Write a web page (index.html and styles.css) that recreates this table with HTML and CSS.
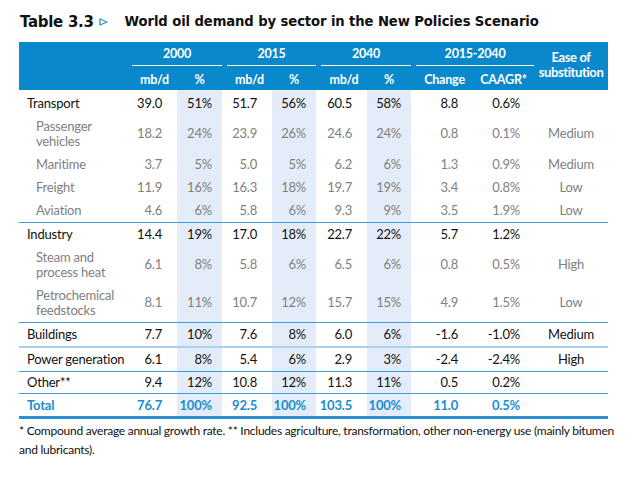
FILE: index.html
```html
<!DOCTYPE html>
<html>
<head>
<meta charset="utf-8">
<link rel="stylesheet" href="styles.css">
</head>
<body>
<div class="page">
  <h1 class="title"><span class="tnum">Table 3.3</span><svg class="tri" width="9" height="8" viewBox="0 0 9 8"><path d="M1 1 L8 4 L1 7 Z" fill="none" stroke="#2b8fd6" stroke-width="1.3" stroke-linejoin="round"/></svg><span class="ttext">World oil demand by sector in the New Policies Scenario</span></h1>
  <table class="data">
    <colgroup>
      <col class="c-label"><col class="c-mb"><col class="c-pc"><col class="c-mb"><col class="c-pc2"><col class="c-mb3"><col class="c-pc2"><col class="c-chg"><col class="c-cag"><col class="c-ease">
    </colgroup>
    <thead>
      <tr class="h1">
        <th></th>
        <th colspan="2"><div class="yr">2000</div></th>
        <th colspan="2"><div class="yr">2015</div></th>
        <th colspan="2"><div class="yr">2040</div></th>
        <th colspan="2"><div class="yr">2015-2040</div></th>
        <th rowspan="2" class="ease-h">Ease of<br>substitution</th>
      </tr>
      <tr class="h2">
        <th></th>
        <th class="first">mb/d</th><th>%</th>
        <th class="first">mb/d</th><th>%</th>
        <th class="first">mb/d</th><th>%</th>
        <th class="first">Change</th><th>CAAGR*</th>
      </tr>
    </thead>
    <tbody>
      <tr class="main top">
        <td class="lbl">Transport</td><td class="mb">39.0</td><td class="pc">51%</td><td class="mb">51.7</td><td class="pc">56%</td><td class="mb">60.5</td><td class="pc">58%</td><td class="chg">8.8</td><td class="cag">0.6%</td><td class="ease"></td>
      </tr>
      <tr class="sub">
        <td class="lbl">Passenger<br>vehicles</td><td class="mb">18.2</td><td class="pc">24%</td><td class="mb">23.9</td><td class="pc">26%</td><td class="mb">24.6</td><td class="pc">24%</td><td class="chg">0.8</td><td class="cag">0.1%</td><td class="ease">Medium</td>
      </tr>
      <tr class="sub">
        <td class="lbl">Maritime</td><td class="mb">3.7</td><td class="pc">5%</td><td class="mb">5.0</td><td class="pc">5%</td><td class="mb">6.2</td><td class="pc">6%</td><td class="chg">1.3</td><td class="cag">0.9%</td><td class="ease">Medium</td>
      </tr>
      <tr class="sub">
        <td class="lbl">Freight</td><td class="mb">11.9</td><td class="pc">16%</td><td class="mb">16.3</td><td class="pc">18%</td><td class="mb">19.7</td><td class="pc">19%</td><td class="chg">3.4</td><td class="cag">0.8%</td><td class="ease">Low</td>
      </tr>
      <tr class="sub">
        <td class="lbl">Aviation</td><td class="mb">4.6</td><td class="pc">6%</td><td class="mb">5.8</td><td class="pc">6%</td><td class="mb">9.3</td><td class="pc">9%</td><td class="chg">3.5</td><td class="cag">1.9%</td><td class="ease">Low</td>
      </tr>
      <tr class="main sep">
        <td class="lbl">Industry</td><td class="mb">14.4</td><td class="pc">19%</td><td class="mb">17.0</td><td class="pc">18%</td><td class="mb">22.7</td><td class="pc">22%</td><td class="chg">5.7</td><td class="cag">1.2%</td><td class="ease"></td>
      </tr>
      <tr class="sub">
        <td class="lbl">Steam and<br>process heat</td><td class="mb">6.1</td><td class="pc">8%</td><td class="mb">5.8</td><td class="pc">6%</td><td class="mb">6.5</td><td class="pc">6%</td><td class="chg">0.8</td><td class="cag">0.5%</td><td class="ease">High</td>
      </tr>
      <tr class="sub">
        <td class="lbl">Petrochemical<br>feedstocks</td><td class="mb">8.1</td><td class="pc">11%</td><td class="mb">10.7</td><td class="pc">12%</td><td class="mb">15.7</td><td class="pc">15%</td><td class="chg">4.9</td><td class="cag">1.5%</td><td class="ease">Low</td>
      </tr>
      <tr class="main sep">
        <td class="lbl">Buildings</td><td class="mb">7.7</td><td class="pc">10%</td><td class="mb">7.6</td><td class="pc">8%</td><td class="mb">6.0</td><td class="pc">6%</td><td class="chg">-1.6</td><td class="cag">-1.0%</td><td class="ease">Medium</td>
      </tr>
      <tr class="main sep-light">
        <td class="lbl">Power generation</td><td class="mb">6.1</td><td class="pc">8%</td><td class="mb">5.4</td><td class="pc">6%</td><td class="mb">2.9</td><td class="pc">3%</td><td class="chg">-2.4</td><td class="cag">-2.4%</td><td class="ease">High</td>
      </tr>
      <tr class="main sep tight">
        <td class="lbl">Other**</td><td class="mb">9.4</td><td class="pc">12%</td><td class="mb">10.8</td><td class="pc">12%</td><td class="mb">11.3</td><td class="pc">11%</td><td class="chg">0.5</td><td class="cag">0.2%</td><td class="ease"></td>
      </tr>
      <tr class="total sep tight">
        <td class="lbl">Total</td><td class="mb">76.7</td><td class="pc">100%</td><td class="mb">92.5</td><td class="pc">100%</td><td class="mb">103.5</td><td class="pc">100%</td><td class="chg">11.0</td><td class="cag">0.5%</td><td class="ease"></td>
      </tr>
    </tbody>
  </table>
  <p class="note">* Compound average annual growth rate. ** Includes agriculture, transformation, other non-energy use (mainly bitumen<br>and lubricants).</p>
</div>
</body>
</html>
```
FILE: styles.css
```css
html, body {
  margin: 0;
  padding: 0;
  background: #ffffff;
}
.page {
  padding: 6px 0 0 19px;
  width: 589px;
  font-family: Lato, "Open Sans", sans-serif;
}
.title {
  margin: 0 0 5px;
  height: 31px;
  display: flex;
  align-items: center;
  font-family: "DejaVu Sans", sans-serif;
  font-weight: bold;
  color: #111;
  white-space: nowrap;
}
.tnum {
  font-size: 15px;
  margin-left: 1px;
  letter-spacing: -0.3px;
}
.tri {
  margin: 0 0 0 5px;
}
.ttext {
  margin-left: 17px;
  font-size: 13.2px;
  font-weight: bold;
  letter-spacing: -0.1px;
}
table.data {
  border-collapse: collapse;
  table-layout: fixed;
  width: 589px;
  font-size: 13px;
  letter-spacing: -0.2px;
}
.c-label { width: 108px; }
.c-mb { width: 50px; }
.c-pc { width: 45px; }
.c-pc2 { width: 44px; }
.c-mb3 { width: 51px; }
.c-chg { width: 62px; }
.c-cag { width: 61px; }
.c-ease { width: 74px; }

thead th {
  background: #0a88cc;
  color: #ffffff;
  font-weight: bold;
  font-size: 12.5px;
  padding: 0;
  text-align: center;
  line-height: 15px;
}
thead tr.h1 th {
  height: 23px;
  vertical-align: bottom;
}
thead tr.h1 .yr {
  margin-left: 5px;
  border-bottom: 1.5px solid #ffffff;
  padding: 4px 0 4px;
}
thead tr.h2 th {
  height: 23.5px;
  vertical-align: middle;
  padding-top: 3px;
  box-sizing: border-box;
}
thead tr.h2 th.first {
  padding-left: 5px;
}
thead tr.h1 th.ease-h {
  vertical-align: middle;
  padding: 0 0 2px;
  line-height: 14.5px;
  font-size: 13px;
  white-space: nowrap;
  letter-spacing: -0.4px;
}
tbody td {
  padding-top: 4px;
  padding-bottom: 4px;
  line-height: 15px;
  vertical-align: middle;
  white-space: nowrap;
}
tbody tr.top td {
  padding-top: 6px;
}
tbody tr.tight td {
  padding-top: 3.5px;
  padding-bottom: 3px;
}
td.lbl {
  text-align: left;
  padding-left: 8px;
}
tr.sub td.lbl {
  padding-left: 17px;
}
tbody tr td.mb {
  text-align: right;
  padding-right: 15px;
}
tbody tr td.pc {
  text-align: right;
  padding-right: 10px;
  background: #e4ecf9;
}
tbody tr td.chg {
  text-align: right;
  padding-right: 15px;
}
tbody tr td.cag {
  text-align: right;
  padding-right: 14px;
}
td.ease {
  text-align: center;
}
tr.main td {
  color: #111111;
}
tr.sub td {
  color: #808080;
}
tr.total td {
  color: #1b8dd1;
  font-weight: bold;
  border-bottom: 3px solid #2b90d4;
}
tr.sep td {
  border-top: 1px solid #3a9ede;
}
tr.sep-light td {
  border-top: 2px solid #a9d1ef;
}
.note {
  margin: 2px 0 0;
  font-size: 12px;
  letter-spacing: -0.25px;
  line-height: 19px;
  color: #111;
  white-space: nowrap;
}
```
